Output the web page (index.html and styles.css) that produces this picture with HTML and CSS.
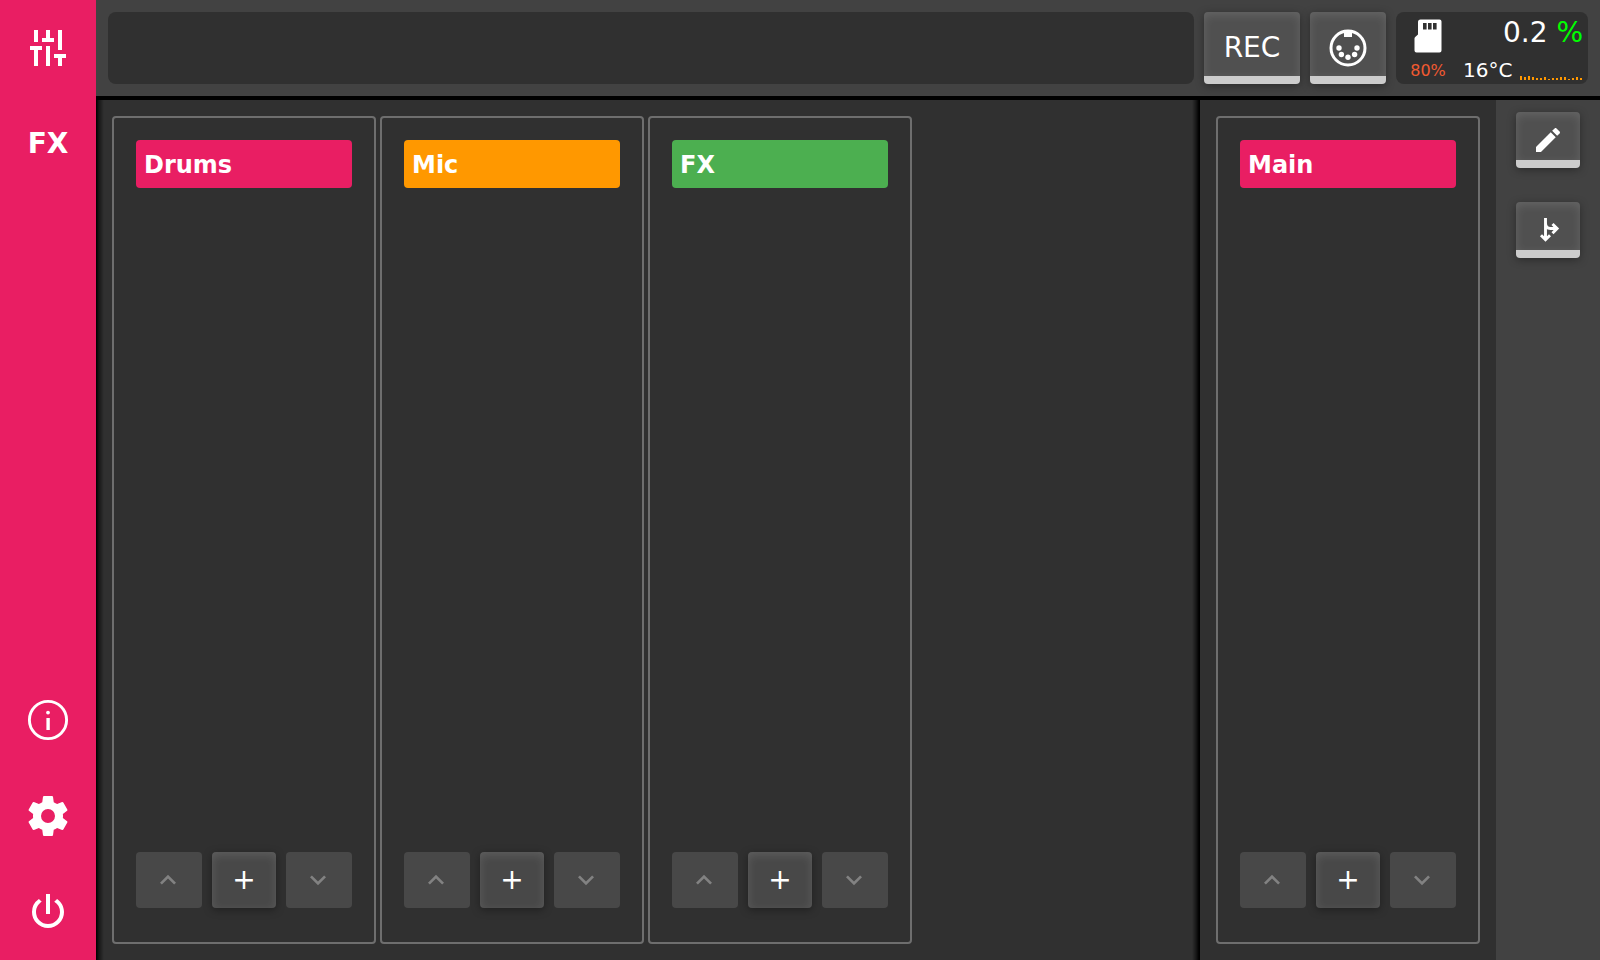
FILE: index.html
```html
<!DOCTYPE html>
<html lang="en">
<head>
<meta charset="utf-8">
<title>Mixer</title>
<link rel="stylesheet" href="styles.css">
</head>
<body>
<svg class="symbols" aria-hidden="true">
  <symbol id="up" viewBox="0 0 24 24"><path fill="currentColor" d="M7.41 15.41 12 10.83l4.59 4.58L18 14l-6-6-6 6z"/></symbol>
  <symbol id="down" viewBox="0 0 24 24"><path fill="currentColor" d="M7.41 8.59 12 13.17l4.59-4.58L18 10l-6 6-6-6z"/></symbol>
</svg>
<div class="app">
  <nav class="sidebar" aria-label="Main">
    <button class="nav-item" aria-label="Mixer">
      <svg class="nav-icon" viewBox="0 0 48 48"><path fill="currentColor" d="M10 6h4v12h-4zM22 6h4v8h4v4H18v-4h4zM34 6h4v20h-4zM6 22h12v4h-4v16h-4V26H6zM22 22h4v20h-4zM30 30h12v4h-4v8h-4v-8h-4z"/></svg>
    </button>
    <button class="nav-item nav-text">FX</button>
    <div class="nav-space"></div>
    <button class="nav-item" aria-label="Information">
      <svg class="nav-icon" viewBox="0 0 48 48"><circle cx="24" cy="24" r="18.600" fill="none" stroke="currentColor" stroke-width="2.900"/><circle cx="24" cy="16.600" r="1.900" fill="currentColor"/><path fill="currentColor" d="M22.400 22h3.400v12h-3.400z"/></svg>
    </button>
    <button class="nav-item" aria-label="Settings">
      <svg class="nav-icon" viewBox="0 0 24 24"><path fill="currentColor" d="M12 15.5A3.5 3.5 0 0 1 8.5 12 3.5 3.5 0 0 1 12 8.5a3.5 3.5 0 0 1 3.5 3.5 3.5 3.5 0 0 1-3.5 3.500M19.430 12.970C19.470 12.650 19.500 12.330 19.500 12s-.03-.66-.07-1l2.110-1.630c.19-.15.24-.42.12-.64l-2-3.460c-.12-.22-.39-.31-.61-.22l-2.490 1c-.52-.39-1.060-.73-1.690-.98l-.37-2.650A.506.506 0 0 0 14 2h-4c-.25 0-.46.18-.5.42l-.37 2.650c-.63.25-1.170.59-1.690.98l-2.490-1c-.22-.09-.49 0-.61.22l-2 3.460c-.13.22-.07.49.12.64L4.570 11c-.04.34-.07.67-.07 1s.03.65.07.970l-2.110 1.660c-.19.15-.25.42-.12.64l2 3.460c.12.22.39.3.61.22l2.490-1.010c.52.4 1.060.74 1.690.99l.37 2.650c.04.24.25.42.5.42h4c.25 0 .46-.18.5-.42l.37-2.650c.63-.26 1.170-.59 1.690-.99l2.490 1.010c.22.08.49 0 .61-.22l2-3.460c.12-.22.07-.49-.12-.64z"/></svg>
    </button>
    <button class="nav-item" aria-label="Power">
      <svg class="nav-icon" viewBox="0 0 24 24"><path fill="currentColor" d="M16.56 5.44l-1.450 1.450A5.969 5.969 0 0 1 18 12a6 6 0 0 1-12 0c0-2.170 1.160-4.060 2.880-5.120L7.440 5.440A7.961 7.961 0 0 0 4 12a8 8 0 0 0 16 0c0-2.720-1.360-5.120-3.440-6.560M13 3h-2v10h2z"/></svg>
    </button>
  </nav>
  <div class="workspace">
    <header class="topbar">
      <div class="display"></div>
      <button class="key key-lit key-rec">REC</button>
      <button class="key key-lit key-midi" aria-label="MIDI">
        <svg class="midi-icon" viewBox="0 0 40 40"><circle cx="20" cy="20" r="17" fill="none" stroke="currentColor" stroke-width="3"/><g fill="currentColor"><path d="M16 2h8v7h-8z"/><circle cx="11" cy="20" r="2.700"/><circle cx="13.400" cy="26.500" r="2.700"/><circle cx="20" cy="29.300" r="2.700"/><circle cx="26.600" cy="26.500" r="2.700"/><circle cx="29" cy="20" r="2.700"/></g></svg>
      </button>
      <section class="status" aria-label="System status">
        <div class="storage">
          <svg class="sd-icon" viewBox="0 0 28 34"><path fill="currentColor" fill-rule="evenodd" d="M6.500.5h19a2 2 0 0 1 2 2v29a2 2 0 0 1-2 2h-23a2 2 0 0 1-2-2V19.500a2 2 0 0 1 .7-1.600L4 15.500V3A2.500 2.500 0 0 1 6.500.5zM9 4v6.600h3.600V4zM14 4v6.600h3.600V4zM19 4v6.600h3.600V4z"/></svg>
          <span class="storage-value">80%</span>
        </div>
        <div class="meters">
          <div class="load">0.2 <span class="load-unit">%</span></div>
          <div class="temperature">
            <span>16°C</span>
            <svg class="graph" viewBox="0 0 62 8" shape-rendering="crispEdges"><path fill="#ff9800" d="M0 4h2v4H0zM4 5h2v3H4zM8 4h2v4H8zM12 5h2v3h-2zM16 6h2v2h-2zM20 6h2v2h-2zM24 5h2v3h-2zM28 7h2v1h-2zM32 6h2v2h-2zM36 6h2v2h-2zM40 5h2v3h-2zM44 5h2v3h-2zM48 7h2v1h-2zM52 6h2v2h-2zM56 5h2v3h-2zM60 6h2v2h-2z"/></svg>
          </div>
        </div>
      </section>
    </header>
    <div class="stage">
      <main class="channels">
        <section class="strip">
          <h2 class="strip-name pink">Drums</h2>
          <div class="strip-controls">
            <button class="step" aria-label="Previous" disabled><svg class="step-icon"><use href="#up"/></svg></button>
            <button class="key key-add" aria-label="Add">+</button>
            <button class="step" aria-label="Next" disabled><svg class="step-icon"><use href="#down"/></svg></button>
          </div>
        </section>
        <section class="strip">
          <h2 class="strip-name orange">Mic</h2>
          <div class="strip-controls">
            <button class="step" aria-label="Previous" disabled><svg class="step-icon"><use href="#up"/></svg></button>
            <button class="key key-add" aria-label="Add">+</button>
            <button class="step" aria-label="Next" disabled><svg class="step-icon"><use href="#down"/></svg></button>
          </div>
        </section>
        <section class="strip">
          <h2 class="strip-name green">FX</h2>
          <div class="strip-controls">
            <button class="step" aria-label="Previous" disabled><svg class="step-icon"><use href="#up"/></svg></button>
            <button class="key key-add" aria-label="Add">+</button>
            <button class="step" aria-label="Next" disabled><svg class="step-icon"><use href="#down"/></svg></button>
          </div>
        </section>
      </main>
      <aside class="master">
        <section class="strip">
          <h2 class="strip-name pink">Main</h2>
          <div class="strip-controls">
            <button class="step" aria-label="Previous" disabled><svg class="step-icon"><use href="#up"/></svg></button>
            <button class="key key-add" aria-label="Add">+</button>
            <button class="step" aria-label="Next" disabled><svg class="step-icon"><use href="#down"/></svg></button>
          </div>
        </section>
      </aside>
      <div class="tools">
        <button class="key key-lit key-tool" aria-label="Edit">
          <svg class="tool-icon" viewBox="0 0 24 24"><path fill="currentColor" d="M20.710 7.040c.39-.39.39-1.040 0-1.410l-2.340-2.340c-.37-.39-1.020-.39-1.410 0l-1.840 1.830 3.750 3.750M3 17.250V21h3.750L17.810 9.930l-3.750-3.750z"/></svg>
        </button>
        <button class="key key-lit key-tool" aria-label="Routing">
          <svg class="tool-icon" viewBox="0 0 32 32"><path fill="none" stroke="currentColor" stroke-width="2.900" d="M13.500 4v22M9 21.300l4.500 4.500 4.500-4.500M13.500 9c0 3.500 2 5.500 5 5.500h6M20.500 10l4.600 4.600-4.600 4.600"/></svg>
        </button>
      </div>
    </div>
  </div>
</div>
</body>
</html>
```
FILE: styles.css
```css
* {
  box-sizing: border-box;
}

body {
  margin: 0;
  background: #303030;
  color: #fff;
  font-family: "DejaVu Sans", sans-serif;
}

button {
  border: 0;
  padding: 0;
  color: inherit;
  font: inherit;
}

svg {
  display: block;
}

.symbols {
  display: none;
}

.app {
  display: flex;
  min-height: 100vh;
}

.sidebar {
  display: flex;
  flex-direction: column;
  flex: 0 0 96px;
  background: #e91e63;
}

.nav-item {
  display: flex;
  align-items: center;
  justify-content: center;
  height: 96px;
  background: none;
}

.nav-text {
  padding-bottom: 2px;
  font-size: 28px;
  font-weight: bold;
}

.nav-icon {
  width: 48px;
  height: 48px;
}

.nav-space {
  flex: 1;
}

.workspace {
  display: flex;
  flex: 1;
  flex-direction: column;
  min-width: 0;
}

.topbar {
  display: flex;
  gap: 10px;
  padding: 12px;
  border-bottom: 4px solid #000;
  background: #424242;
}

.display {
  flex: 1;
  border-radius: 8px;
  background: #303030;
}

.key {
  display: flex;
  align-items: center;
  justify-content: center;
  border-radius: 4px;
  background: #484848;
  box-shadow: inset 0 3px 10px rgba(255, 255, 255, 0.12), 0 2px 8px rgba(0, 0, 0, 0.35);
  font-size: 28px;
}

.key-lit {
  border-bottom: 8px solid #ccc;
  background: #505050;
}

.key-rec {
  width: 96px;
  height: 72px;
  padding-top: 6px;
}

.key-midi {
  width: 76px;
  height: 72px;
  padding-top: 8px;
}

.midi-icon {
  width: 40px;
  height: 40px;
}

.status {
  display: flex;
  width: 192px;
  height: 72px;
  border-radius: 8px;
  background: #303030;
}

.storage {
  display: flex;
  flex: 0 0 64px;
  flex-direction: column;
  align-items: center;
  justify-content: space-between;
  padding: 7px 0 3px;
}

.sd-icon {
  width: 28px;
  height: 34px;
}

.storage-value {
  color: #f05a30;
  font-size: 16px;
  line-height: 20px;
}

.meters {
  display: flex;
  flex: 1;
  flex-direction: column;
  justify-content: space-between;
  padding: 5px 0 4px;
}

.load {
  padding-right: 5px;
  font-size: 28px;
  line-height: 32px;
  text-align: right;
}

.load-unit {
  color: #0f0;
}

.temperature {
  display: flex;
  align-items: flex-end;
  justify-content: space-between;
  padding: 0 6px 0 3px;
  font-size: 20px;
  line-height: 20px;
}

.graph {
  width: 62px;
  height: 8px;
}

.stage {
  display: flex;
  flex: 1;
}

.channels {
  display: flex;
  flex: 1;
  gap: 4px;
  padding: 16px;
  background:
    linear-gradient(to right, #000, rgba(0, 0, 0, 0.5) 3px, transparent 8px),
    linear-gradient(to left, #000 1px, rgba(0, 0, 0, 0.5) 4px, transparent 8px),
    #303030;
}

.master {
  display: flex;
  padding: 16px;
}

.strip {
  display: flex;
  flex: 0 0 264px;
  flex-direction: column;
  justify-content: space-between;
  padding: 22px 22px 34px;
  border: 2px solid #6e6e6e;
  border-radius: 4px;
}

.strip-name {
  margin: 0;
  padding: 2px 8px 0;
  border-radius: 4px;
  font-size: 24px;
  line-height: 46px;
}

.pink {
  background: #e91e63;
}

.orange {
  background: #ff9800;
}

.green {
  background: #4caf50;
}

.strip-controls {
  display: flex;
  gap: 10px;
  height: 56px;
}

.step {
  display: flex;
  flex: 1;
  align-items: center;
  justify-content: center;
  padding-right: 2px;
  border-radius: 4px;
  background: #484848;
  color: #828282;
}

.step-icon {
  width: 32px;
  height: 32px;
}

.key-add {
  width: 64px;
  padding-bottom: 2px;
}

.tools {
  display: flex;
  flex: 0 0 104px;
  flex-direction: column;
  align-items: center;
  gap: 34px;
  padding: 12px 0;
  background: #424242;
}

.key-tool {
  width: 64px;
  height: 56px;
  padding-top: 8px;
}

.tool-icon {
  width: 32px;
  height: 32px;
}
```
